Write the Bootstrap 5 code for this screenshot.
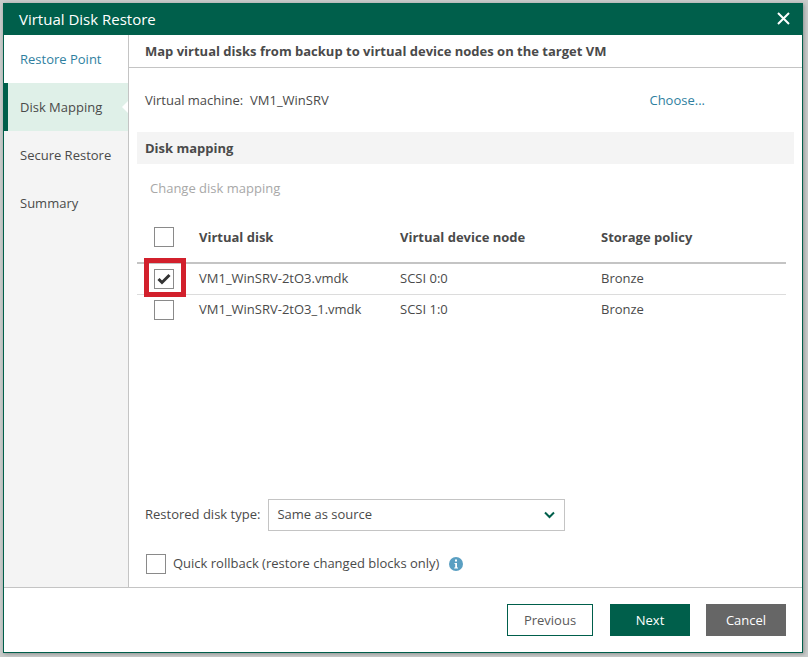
<!DOCTYPE html>
<html lang="en">
<head>
    <title>Virtual Disk Restore</title>
    <meta charset="utf-8">
    <meta name="viewport" content="width=device-width, initial-scale=1">
    <link href="https://cdn.jsdelivr.net/npm/bootstrap@5.3.1/dist/css/bootstrap.min.css" rel="stylesheet">
    <script src="https://cdn.jsdelivr.net/npm/bootstrap@5.3.1/dist/js/bootstrap.bundle.min.js"></script>
    <style>
        html, body {
            height: 100%;
        }
        body {
            font-family: "Open Sans", "Liberation Sans", sans-serif;
            font-size: 13px;
            color: #4a4a4a;
            background: #c9cccb;
            padding: 3px 5px 4px 3px;
            overflow: hidden;
        }
        .wizard {
            height: 650px;
            background: #fff;
            border: 1px solid #005f4b;
            border-top: 0;
            box-shadow: 1px 1px 4px rgba(0, 0, 0, .3);
        }
        .wizard-title {
            height: 32px;
            flex: none;
            background: #005f4b;
            color: #fff;
            font-size: 15px;
            padding-left: 15px;
            padding-right: 12px;
        }
        .wizard-title svg {
            margin-bottom: 2px;
        }
        .wizard-body {
            height: 552px;
            flex: none;
        }
        .side {
            width: 125px;
            flex: none;
            background: #f4f4f4;
            border-right: 1px solid #c4c4c4;
        }
        .side-item {
            height: 48px;
            padding-left: 16px;
            line-height: 48px;
            position: relative;
        }
        .side-item.done {
            background: #fff;
            color: #2f7f9f;
        }
        .side-item.active {
            background: #dff0e8;
            border-left: 4px solid #005f4b;
            padding-left: 12px;
        }
        .side-item.active::after {
            content: "";
            position: absolute;
            right: 0;
            top: 18px;
            border: 6px solid transparent;
            border-right-color: #fff;
            border-left-width: 0;
        }
        .page-head {
            height: 33px;
            padding-left: 16px;
            font-weight: 700;
            line-height: 32px;
            border-bottom: 1px solid #c4c4c4;
        }
        .vm-line {
            height: 64px;
            padding-top: 2px;
            padding-left: 16px;
            padding-right: 97px;
        }
        .choose {
            color: #2f7f9f;
            text-decoration: none;
        }
        .band {
            height: 32px;
            margin-left: 8px;
            margin-right: 8px;
            padding-left: 8px;
            background: #f4f4f4;
            font-weight: 700;
            line-height: 32px;
        }
        .change-link {
            height: 48px;
            padding-left: 21px;
            padding-top: 15px;
            color: #a8a8a8;
        }
        .disk-table {
            margin-left: 8px;
            width: 649px;
            margin-bottom: 0;
            --bs-table-color: #4a4a4a;
            table-layout: fixed;
        }
        .disk-table th, .disk-table td {
            padding: 0;
            vertical-align: middle;
            font-size: 13px;
            color: #4a4a4a;
        }
        .disk-table th {
            height: 51px;
            font-weight: 700;
            border-bottom: 2px solid #c4c4c4;
        }
        .disk-table th + th {
            padding-top: 2px;
        }
        .disk-table td {
            height: 31px;
            border-bottom: 1px solid #dcdcdc;
        }
        .disk-table tr:last-child td {
            border-bottom: 0;
        }
        .col-check { width: 62px; }
        .col-disk { width: 201px; }
        .col-node { width: 201px; }
        .tick-box {
            display: block;
            width: 20px;
            height: 20px;
            margin-left: 17px;
            border: 1px solid #8a8a8a;
            background: #fff;
            position: relative;
        }
        .tick-box svg {
            position: absolute;
            left: 2px;
            top: 3px;
        }
        .red-mark {
            position: absolute;
            left: -11px;
            top: -12px;
            width: 42px;
            height: 39px;
            border: 5px solid #d2202c;
        }
        .type-row {
            margin-top: 174px;
            padding-left: 16px;
        }
        .type-select {
            width: 297px;
            height: 32px;
            margin-left: 8px;
            padding-left: 8px;
            padding-right: 9px;
            border: 1px solid #c4c4c4;
        }
        .rollback-row {
            margin-top: 23px;
            padding-left: 17px;
        }
        .rollback-row .tick-box {
            margin-left: 0;
            margin-right: 7px;
        }
        .info-mark {
            margin-left: 10px;
        }
        .wizard-foot {
            height: 65px;
            flex: none;
            border-top: 1px solid #c4c4c4;
            padding-right: 16px;
            padding-top: 16px;
        }
        .foot-btn {
            width: 86px;
            height: 32px;
            padding: 0;
            border-radius: 0;
            font-size: 13px;
            line-height: 30px;
            border: 1px solid #005f4b;
        }
        .foot-btn.back {
            background: #fff;
            color: #5a5a5a;
            margin-right: 17px;
        }
        .foot-btn.next {
            width: 80px;
            background: #005f4b;
            color: #fff;
            margin-right: 16px;
        }
        .foot-btn.stop {
            width: 80px;
            background: #666;
            border-color: #666;
            color: #fff;
        }
    </style>
</head>
<body>
    <div class="wizard d-flex flex-column">
        <div class="wizard-title d-flex align-items-center justify-content-between">
            <span>Virtual Disk Restore</span>
            <svg width="13" height="13" viewBox="0 0 13 13"><path d="M1 1 12 12M12 1 1 12" stroke="#fff" stroke-width="2" fill="none"/></svg>
        </div>
        <div class="wizard-body d-flex">
            <div class="side">
                <div class="side-item done">Restore Point</div>
                <div class="side-item active">Disk Mapping</div>
                <div class="side-item">Secure Restore</div>
                <div class="side-item">Summary</div>
            </div>
            <div class="flex-grow-1">
                <div class="page-head">Map virtual disks from backup to virtual device nodes on the target VM</div>
                <div class="vm-line d-flex align-items-center justify-content-between">
                    <span>Virtual machine:&nbsp; VM1_WinSRV</span>
                    <a class="choose" href="#">Choose...</a>
                </div>
                <div class="band">Disk mapping</div>
                <div class="change-link">Change disk mapping</div>
                <table class="table disk-table">
                    <thead>
                        <tr>
                            <th class="col-check"><span class="tick-box"></span></th>
                            <th class="col-disk">Virtual disk</th>
                            <th class="col-node">Virtual device node</th>
                            <th>Storage policy</th>
                        </tr>
                    </thead>
                    <tbody>
                        <tr>
                            <td>
                                <span class="tick-box">
                                    <svg width="14" height="12" viewBox="0 0 14 12"><path d="M1.5 6 5 9.5 12.5 2" stroke="#333" stroke-width="3" fill="none"/></svg>
                                    <span class="red-mark"></span>
                                </span>
                            </td>
                            <td>VM1_WinSRV-2tO3.vmdk</td>
                            <td>SCSI 0:0</td>
                            <td>Bronze</td>
                        </tr>
                        <tr>
                            <td><span class="tick-box"></span></td>
                            <td>VM1_WinSRV-2tO3_1.vmdk</td>
                            <td>SCSI 1:0</td>
                            <td>Bronze</td>
                        </tr>
                    </tbody>
                </table>
                <div class="type-row d-flex align-items-center">
                    <span>Restored disk type:</span>
                    <div class="type-select d-flex align-items-center justify-content-between">
                        <span>Same as source</span>
                        <svg width="11" height="8" viewBox="0 0 11 8"><path d="M1 1.5 5.5 6 10 1.5" stroke="#005f4b" stroke-width="2" fill="none"/></svg>
                    </div>
                </div>
                <div class="rollback-row d-flex align-items-center">
                    <span class="tick-box"></span>
                    <span>Quick rollback (restore changed blocks only)</span>
                    <svg class="info-mark" width="14" height="14" viewBox="0 0 14 14"><circle cx="7" cy="7" r="7" fill="#5a9fc2"/><rect x="6" y="2.5" width="2" height="2" fill="#fff"/><path d="M5.5 6H8V10.5H9V11.5H5.2V10.5H6.2V7H5.5Z" fill="#fff"/></svg>
                </div>
            </div>
        </div>
        <div class="wizard-foot d-flex justify-content-end align-items-start">
            <button type="button" class="btn foot-btn back">Previous</button>
            <button type="button" class="btn foot-btn next">Next</button>
            <button type="button" class="btn foot-btn stop">Cancel</button>
        </div>
    </div>
</body>
</html>
